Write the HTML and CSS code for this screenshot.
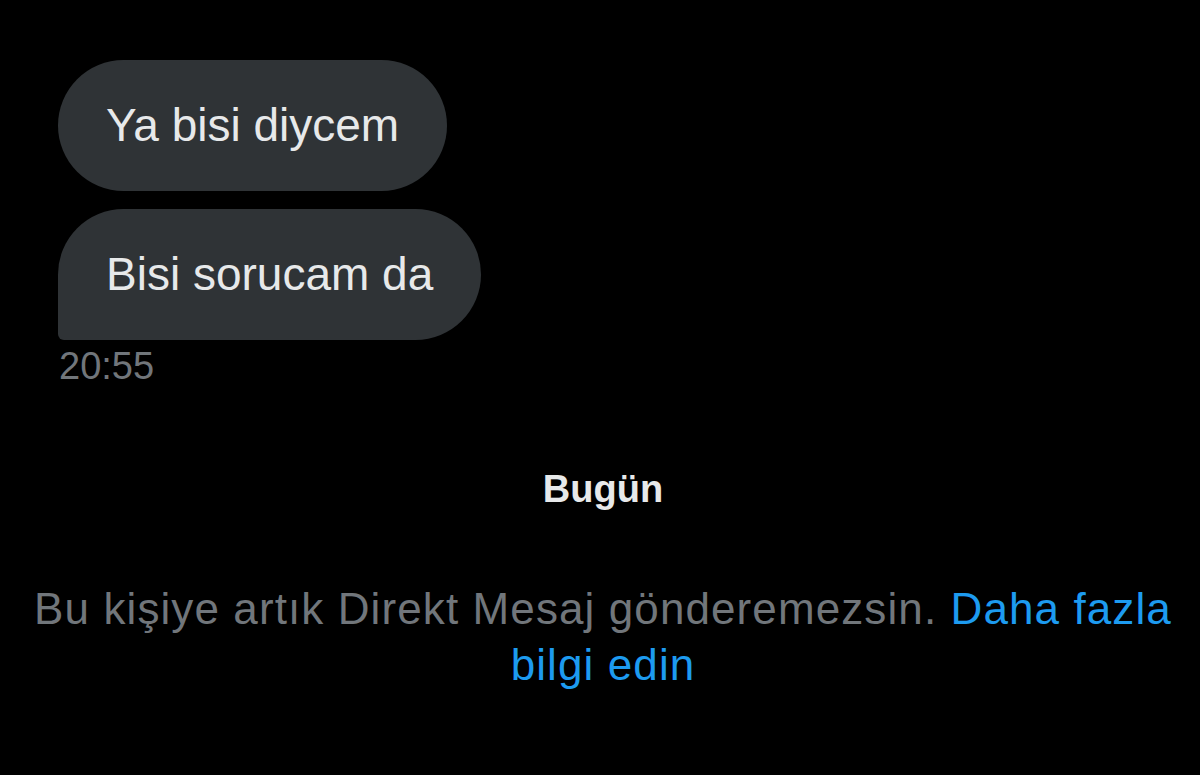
FILE: index.html
```html
<!DOCTYPE html>
<html lang="tr">
<head>
<meta charset="utf-8">
<title>Mesajlar</title>
<link rel="stylesheet" href="styles.css">
</head>
<body>
<main class="chat">
  <section class="thread">
    <div class="bubble">Ya bisi diycem</div>
    <div class="bubble bubble-last">Bisi sorucam da</div>
    <div class="time">20:55</div>
  </section>
  <div class="day">Bugün</div>
  <p class="notice">Bu kişiye artık Direkt Mesaj gönderemezsin. <a class="link" href="#">Daha fazla bilgi edin</a></p>
</main>
</body>
</html>
```
FILE: styles.css
```css
html, body {
  margin: 0;
  padding: 0;
  background: #000;
  height: 100%;
}
body {
  font-family: "Liberation Sans", Arial, sans-serif;
  color: #e7e9ea;
}
.chat {
  display: flex;
  flex-direction: column;
  padding-top: 60px;
}
.thread {
  display: flex;
  flex-direction: column;
  align-items: flex-start;
  gap: 18px;
  padding-left: 58px;
}
.bubble {
  background: #2f3336;
  color: #e7e9ea;
  font-size: 46px;
  line-height: 57px;
  padding: 37px 48px;
  border-radius: 66px;
}
.bubble-last {
  border-bottom-left-radius: 6px;
}
.time {
  margin-top: -14px;
  color: #71767b;
  font-size: 38px;
  line-height: 44px;
  padding-left: 1px;
}
.day {
  margin-top: 79px;
  text-align: center;
  font-weight: bold;
  font-size: 38px;
  line-height: 44px;
  color: #e7e9ea;
  padding-left: 6px;
}
.notice {
  margin: 70px auto 0;
  width: 1150px;
  padding-left: 6px;
  text-align: center;
  color: #71767b;
  font-size: 44px;
  line-height: 56px;
  letter-spacing: 1.1px;
}
.link {
  color: #1d9bf0;
  text-decoration: none;
}
```
